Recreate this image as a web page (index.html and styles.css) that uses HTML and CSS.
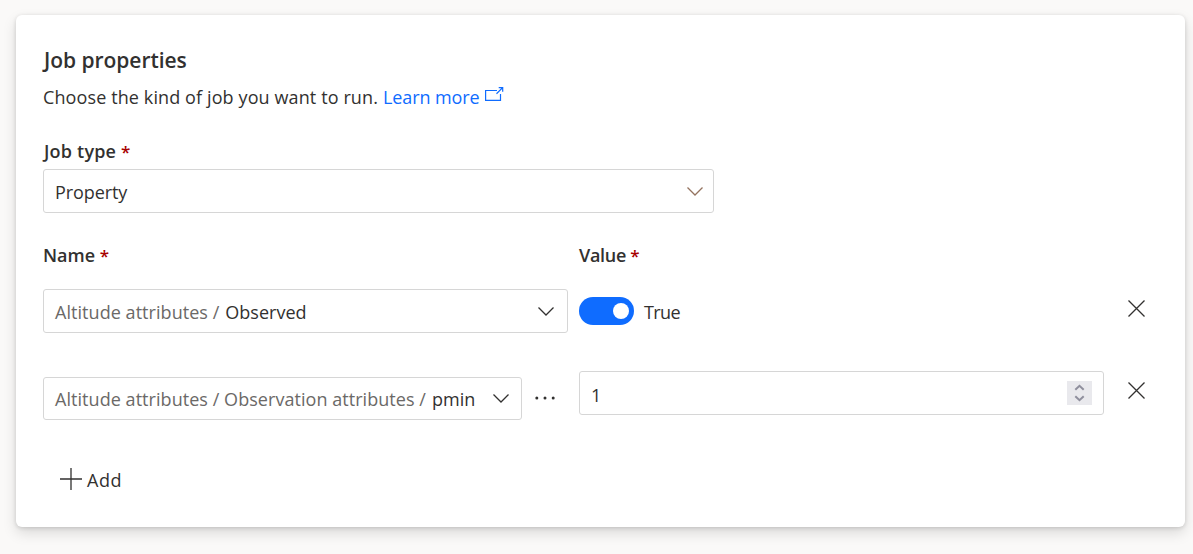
FILE: index.html
```html
<!DOCTYPE html>
<html lang="en">
<head>
<meta charset="utf-8">
<title>Job properties</title>
<link rel="stylesheet" href="styles.css">
</head>
<body>
<main class="card">
  <h1 class="title">Job properties</h1>
  <p class="intro"><span class="sentence">Choose the kind of job you want to run.</span><a class="link" href="#">Learn more</a><svg class="external" width="19" height="15" viewBox="0 0 19 15"><path d="M12 3.500H.6v9.900h14.900V7M11.500 6.700 17.400.9M13.700.7h4v4"/></svg></p>

  <label class="label type-label">Job type <span class="required">*</span></label>
  <div class="field type-field">
    <span class="value">Property</span>
    <svg class="chevron warm" width="16" height="9" viewBox="0 0 16 9"><path d="M.5.5 8 8 15.500.5"/></svg>
  </div>

  <div class="headings">
    <span class="label">Name <span class="required">*</span></span>
    <span class="label value-label">Value <span class="required">*</span></span>
  </div>

  <div class="row first">
    <div class="field name-field">
      <span class="path">Altitude attributes /</span><span class="leaf observed">Observed</span>
      <svg class="chevron" width="16" height="9" viewBox="0 0 16 9"><path d="M.5.5 8 8 15.500.5"/></svg>
    </div>
    <div class="toggle"><span class="knob"></span></div>
    <span class="state">True</span>
    <svg class="remove" width="17" height="17" viewBox="0 0 17 17"><path d="M.5.5l16 16M16.500.5l-16 16"/></svg>
  </div>

  <div class="row second">
    <div class="field short-field">
      <span class="path">Altitude attributes / Observation attributes /</span><span class="leaf pmin">pmin</span>
      <svg class="chevron" width="16" height="9" viewBox="0 0 16 9"><path d="M.5.5 8 8 15.500.5"/></svg>
    </div>
    <svg class="more" width="20" height="4" viewBox="0 0 20 4"><circle cx="1.800" cy="2" r="1.500"/><circle cx="10" cy="2" r="1.500"/><circle cx="18.200" cy="2" r="1.500"/></svg>
    <div class="field number-field">
      <span class="number">1</span>
      <span class="spinner"><svg width="25" height="24" viewBox="0 0 25 24"><path d="M8.300 8.800 12.500 4.800l4.200 4M8.300 15.200l4.200 4 4.200-4"/></svg></span>
    </div>
    <svg class="remove" width="17" height="17" viewBox="0 0 17 17"><path d="M.5.5l16 16M16.500.5l-16 16"/></svg>
  </div>

  <div class="add">
    <svg width="22" height="22" viewBox="0 0 22 22"><path d="M11 0v22M0 11h22"/></svg>
    <span class="add-text">Add</span>
  </div>
</main>
</body>
</html>
```
FILE: styles.css
```css
* { box-sizing: border-box; }
body {
  margin: 0;
  height: 554px;
  padding: 15px 8px 27px 16px;
  background: #faf9f8;
  color: #323130;
  font: 18px/24px "Open Sans", "Noto Sans", sans-serif;
  white-space: nowrap;
  overflow: hidden;
}
.card {
  height: 512px;
  padding: 31px 27px;
  background: #fff;
  border-radius: 6px;
  box-shadow: 0 6px 14px rgba(0, 0, 0, .13), 0 1px 4px rgba(0, 0, 0, .14);
}
svg { display: block; flex: none; fill: none; stroke: #323130; stroke-width: 1.3; }
.title { margin: 0 0 0 1px; font-size: 21px; line-height: 28px; font-weight: 600; letter-spacing: -.04px; }
.intro { display: flex; margin: 11px 0 0; height: 24px; }
.sentence { letter-spacing: .11px; }
.link { margin-left: 5px; color: #0f6cff; text-decoration: none; letter-spacing: -.1px; }
.external { margin: 2px 0 0 5px; stroke: #0f6cff; stroke-width: 1.200; }
.label { font-weight: 600; }
.required { color: #a80000; font-size: 17px; }
.type-label { display: block; margin: 30px 0 0 1px; height: 24px; letter-spacing: .2px; }
.field {
  display: flex;
  align-items: center;
  height: 44px;
  padding: 2px 10px 0 11px;
  border: 1px solid #d6d6d6;
  border-radius: 3px;
  flex: none;
}
.type-field { width: 671px; margin-top: 6px; }
.value { letter-spacing: -.1px; }
.chevron { margin-left: auto; margin-top: -2px; margin-right: 3px; }
.warm { margin-right: 0; stroke: #94735f; }
.headings { display: flex; height: 24px; margin-top: 30px; }
.headings .label { width: 536px; }
.value-label { letter-spacing: -.3px; }
.row { display: flex; }
.first { margin-top: 22px; height: 44px; }
.name-field { width: 525px; }
.path { color: #6b6967; letter-spacing: .05px; }
.leaf { margin-left: 6px; }
.toggle {
  display: flex;
  align-items: center;
  justify-content: flex-end;
  width: 55px;
  height: 28px;
  margin: 8px 0 0 11px;
  padding-right: 5px;
  border-radius: 14px;
  background: #0f6cff;
}
.knob { width: 16px; height: 16px; border-radius: 50%; background: #fff; }
.state { margin: 11px 0 0 10px; letter-spacing: -.6px; }
.remove { margin: 11px 13px 0 auto; }
.second { margin-top: 38px; height: 49px; }
.short-field { width: 479px; height: 43px; margin-top: 6px; padding: 0 9px 0 11px; }
.short-field .chevron { margin-top: 0; }
.more { margin: 25px 0 0 13px; fill: #323130; stroke: none; }
.number-field { width: 525px; margin-left: 24px; padding: 0 11px; }
.number { margin-top: 3px; }
.spinner { margin-left: auto; width: 25px; height: 24px; background: #e9e9ed; }
.spinner svg { stroke: #8f8f9d; stroke-width: 2; }
.add { display: flex; align-items: center; margin: 48px 0 0 17px; height: 22px; }
.add-text { margin: 2px 0 0 5px; letter-spacing: .6px; }
```
